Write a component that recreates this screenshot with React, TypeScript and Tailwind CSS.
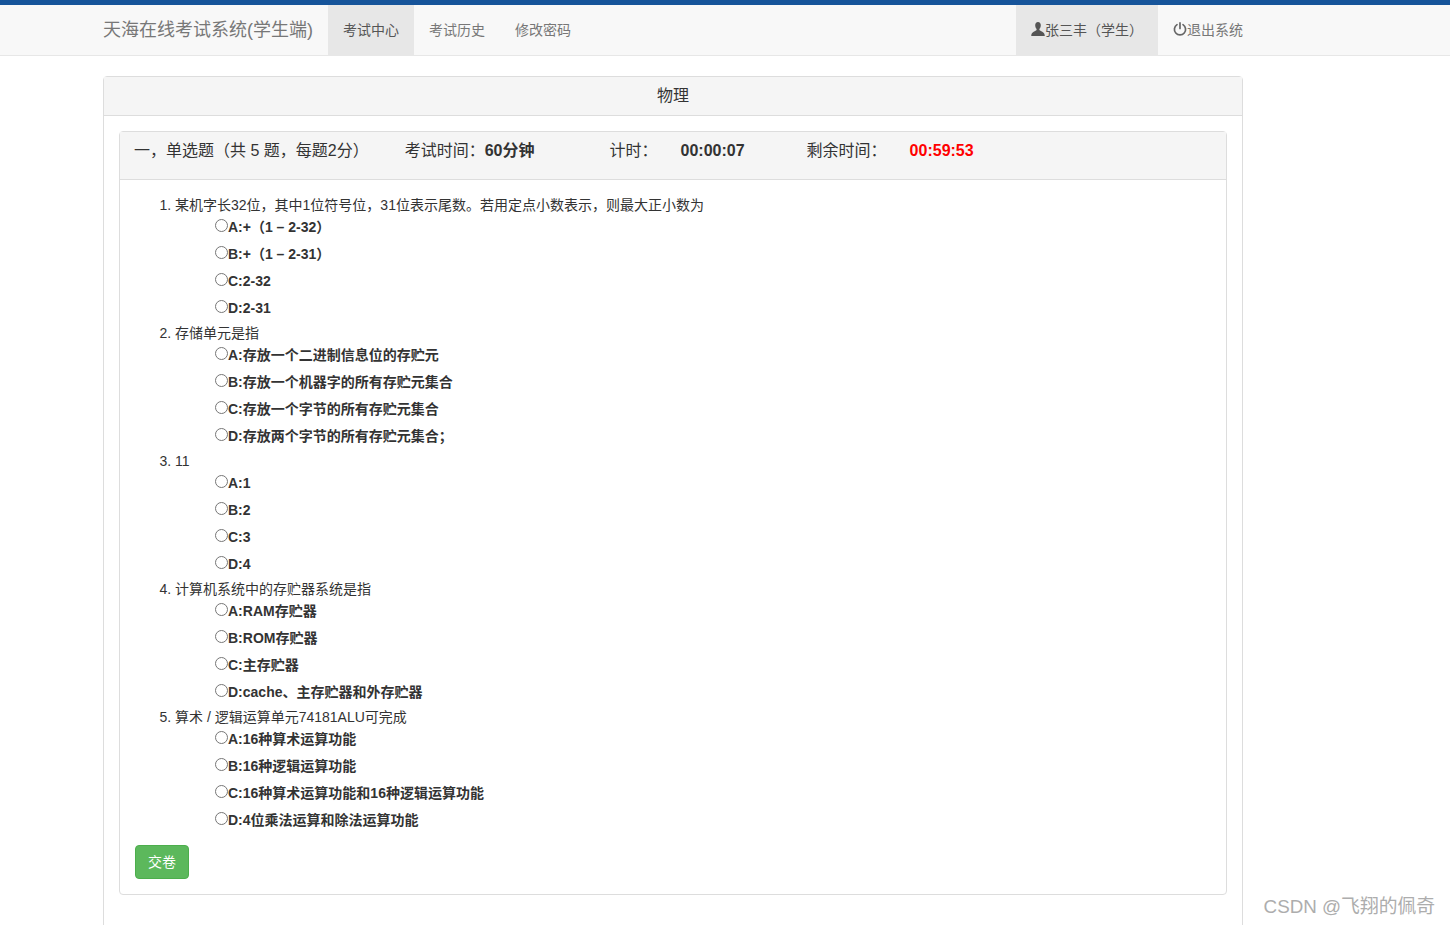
import React from "react";

const questions: { q: string; opts: string[] }[] = [
  {
    q: "某机字长32位，其中1位符号位，31位表示尾数。若用定点小数表示，则最大正小数为",
    opts: ["A:+（1 – 2-32）", "B:+（1 – 2-31）", "C:2-32", "D:2-31"],
  },
  {
    q: "存储单元是指",
    opts: [
      "A:存放一个二进制信息位的存贮元",
      "B:存放一个机器字的所有存贮元集合",
      "C:存放一个字节的所有存贮元集合",
      "D:存放两个字节的所有存贮元集合；",
    ],
  },
  { q: "11", opts: ["A:1", "B:2", "C:3", "D:4"] },
  {
    q: "计算机系统中的存贮器系统是指",
    opts: ["A:RAM存贮器", "B:ROM存贮器", "C:主存贮器", "D:cache、主存贮器和外存贮器"],
  },
  {
    q: "算术 / 逻辑运算单元74181ALU可完成",
    opts: [
      "A:16种算术运算功能",
      "B:16种逻辑运算功能",
      "C:16种算术运算功能和16种逻辑运算功能",
      "D:4位乘法运算和除法运算功能",
    ],
  },
];

const navItem = "flex h-full items-center px-[15px] text-[14px] text-[#777]";

export default function App() {
  return (
    <div className="relative h-[925px] overflow-hidden bg-white font-['Liberation_Sans','Noto_Sans_CJK_SC',sans-serif] text-[14px] text-[#333]">
      <div className="h-[5px] bg-[#16549a]" />
      <nav className="h-[51px] border-b border-[#e7e7e7] bg-[#f8f8f8]">
        <div className="ml-[88px] flex h-[50px] w-[1170px] items-center">
          <a className="flex h-full items-center px-[15px] text-[18px] text-[#777]">天海在线考试系统(学生端)</a>
          <a className={`${navItem} bg-[#e7e7e7] !text-[#555]`}>考试中心</a>
          <a className={navItem}>考试历史</a>
          <a className={navItem}>修改密码</a>
          <div className="ml-auto flex h-full">
            <a className={`${navItem} bg-[#e7e7e7] !text-[#555]`}>
              <svg viewBox="0 0 14 14" className="mb-[2px] h-[14px] w-[14px] fill-[#555]">
                <path d="M7 0C5.2 0 4.2 1.3 4.2 3.2c0 1.4.5 2.8 1.3 3.6.2.3.2.8 0 1.2-.4.7-1.4 1-2.8 1.7C1.2 10.5.4 11.3.2 14h13.6c-.2-2.7-1-3.5-2.5-4.3-1.4-.7-2.4-1-2.8-1.7-.2-.4-.2-.9 0-1.2.8-.8 1.3-2.2 1.3-3.6C9.8 1.3 8.8 0 7 0z" />
              </svg>
              <span>张三丰（学生）</span>
            </a>
            <a className={navItem}>
              <svg viewBox="0 0 14 14" fill="none" stroke="#666" strokeWidth="1.7" strokeLinecap="round" className="mb-[2px] h-[14px] w-[14px]">
                <path d="M4 2.6a5.6 5.6 0 1 0 6 0" />
                <path d="M7 .9v5.6" />
              </svg>
              <span>退出系统</span>
            </a>
          </div>
        </div>
      </nav>

      <main className="ml-[103px] mt-5 w-[1140px]">
        <section className="rounded border border-[#ddd] pb-[60px]">
          <header className="flex h-[39px] items-center justify-center border-b border-[#ddd] bg-[#f5f5f5] text-[16px]">
            物理
          </header>
          <div className="px-[15px] pt-[15px]">
            <div className="rounded border border-[#ddd]">
              <div className="flex h-[48px] items-center border-b border-[#ddd] bg-[#f5f5f5] px-[14px] pb-[10px] text-[16px]">
                <span>一，单选题（共 5 题，每题2分）</span>
                <span className="ml-[36px]">考试时间：</span>
                <b>60分钟</b>
                <span className="ml-[75px]">计时：</span>
                <b className="ml-[23px]">00:00:07</b>
                <span className="ml-[62px]">剩余时间：</span>
                <b className="ml-[23px] text-[#ff0000]">00:59:53</b>
              </div>
              <div className="p-[15px]">
                <ol className="list-decimal pl-[40px]">
                  {questions.map((item, i) => (
                    <li key={i} className={i ? "mt-[5px] leading-5" : "leading-5"}>
                      {item.q}
                      <div className="mt-[2px] flex flex-col gap-[7px] pl-[40px]">
                        {item.opts.map((o) => (
                          <label key={o} className="flex h-5 font-bold leading-5">
                            <input type="radio" name={`q${i}`} className="m-0 mt-[2px] h-[13px] w-[13px] shrink-0" />
                            <span>{o}</span>
                          </label>
                        ))}
                      </div>
                    </li>
                  ))}
                </ol>
                <button className="mt-[15px] h-[34px] w-[54px] rounded border border-[#4cae4c] bg-[#5cb85c] text-[14px] text-white">
                  交卷
                </button>
              </div>
            </div>
          </div>
        </section>
      </main>

      <div className="absolute bottom-[4px] right-[15px] text-[18.8px] leading-7 text-[#adadad]">CSDN @飞翔的佩奇</div>
    </div>
  );
}
